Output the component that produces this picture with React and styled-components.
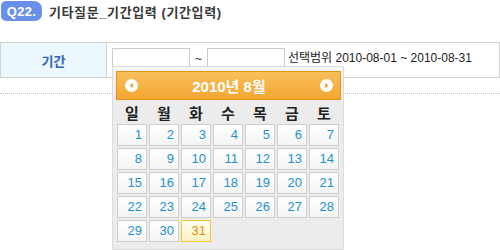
import React from 'react';
import styled, { createGlobalStyle } from 'styled-components';

const GlobalStyle = createGlobalStyle`
  html, body {
    margin: 0;
    padding: 0;
    background: #fff;
  }
  body {
    font-family: "Liberation Sans", "Noto Sans CJK KR", sans-serif;
    color: #333;
  }
`

const Page = styled.div`
  position: relative;
  width: 500px;
  height: 250px;
  overflow: hidden;
`

const TitleRow = styled.div`
  display: flex;
  align-items: center;
  gap: 7px;
  height: 20px;
  padding-top: 1px;
`

const Badge = styled.span`
  display: flex;
  align-items: center;
  justify-content: center;
  width: 41px;
  height: 20px;
  margin-left: 1px;
  border-radius: 5px 8px 7px 5px;
  background: #6a8fe8;
  color: #fff;
  font-size: 13px;
  font-weight: bold;
  letter-spacing: 0.3px;
`

const Title = styled.h2`
  margin: 0;
  font-size: 13px;
  font-weight: bold;
  letter-spacing: 0.6px;
  color: #3a3a3a;
`

const FormTable = styled.div`
  display: grid;
  grid-template-columns: 106px 1fr;
  width: 498px;
  height: 34px;
  margin-top: 21px;
  border: 1px solid #d3d3d3;
`

const LabelCell = styled.div`
  display: flex;
  align-items: center;
  justify-content: center;
  background: #edf7fe;
  border-right: 1px solid #d3d3d3;
  color: #2a68b8;
  font-size: 13px;
  font-weight: bold;
`

const ValueCell = styled.div`
  display: flex;
  align-items: flex-start;
  padding: 5px 0 0 5px;
  font-size: 12px;
`

const DateField = styled.div`
  position: relative;
`

const DateInput = styled.input`
  display: block;
  box-sizing: border-box;
  width: 78px;
  height: 20px;
  margin: 0;
  border: 1px solid #cbcbcb;
  background: #fff;
`

const Tilde = styled.span`
  width: 17px;
  line-height: 22px;
  text-align: center;
  color: #333;
`

const RangeText = styled.span`
  margin-left: 3px;
  line-height: 20px;
  color: #222;
  white-space: nowrap;
`

const Divider = styled.div`
  margin-top: 15px;
  border-top: 1px dotted #c4c4c4;
`

const Calendar = styled.div`
  position: absolute;
  top: 18px;
  left: 0;
  box-sizing: border-box;
  width: 232px;
  height: 184px;
  padding: 4px 3px 0 3px;
  border: 1px solid #dcdcdc;
  background: linear-gradient(#f8f8f8, #ececec 30px, #ececec);
  z-index: 2;
`

const CalHeader = styled.div`
  display: flex;
  align-items: center;
  justify-content: space-between;
  box-sizing: border-box;
  width: 225px;
  height: 29px;
  padding: 0 7px 0 8px;
  border: 1px solid #e49511;
  background: linear-gradient(#f8bf5c, #f3a631);
  color: #fff;
  font-size: 15px;
  font-weight: bold;
`

const NavButton = styled.svg`
  display: block;
  width: 13px;
  height: 13px;
`

const WeekRow = styled.div`
  display: grid;
  grid-template-columns: repeat(7, 30px);
  column-gap: 2px;
  margin-left: 1px;
  height: 24px;
  align-items: center;
`

const WeekName = styled.span`
  text-align: center;
  font-size: 15px;
  font-weight: bold;
  color: #222;
`

const DayGrid = styled.div`
  display: grid;
  grid-template-columns: repeat(7, 30px);
  grid-auto-rows: 22px;
  gap: 2px;
  margin-left: 1px;
`

const DayCell = styled.span`
  box-sizing: border-box;
  padding-right: 4px;
  border: 1px solid ${props => props.today ? "#f2c534" : "#cdcdcd"};
  background: ${props => props.today
    ? "linear-gradient(#fffdf0, #fff1c4)"
    : "linear-gradient(#ffffff, #f4f4f4)"};
  color: ${props => props.today ? "#e58c07" : "#1e92cd"};
  font-size: 13px;
  line-height: 20px;
  text-align: right;
`

function Arrow({ dir }) {
  return (
    <NavButton viewBox="0 0 13 13">
      <circle cx="6.5" cy="6.5" r="6.5" fill="#fff" />
      {dir === "prev"
        ? <polygon points="7.8,3.8 4.6,6.5 7.8,9.2" fill="#f0a02a" />
        : <polygon points="5.2,3.8 8.4,6.5 5.2,9.2" fill="#f0a02a" />}
    </NavButton>
  )
}

const weekNames = ["일", "월", "화", "수", "목", "금", "토"]
const days = Array.from({ length: 31 }, (_, i) => i + 1)

export default function App() {
  return (
    <Page>
      <GlobalStyle />
      <TitleRow>
        <Badge>Q22.</Badge>
        <Title>기타질문_기간입력 (기간입력)</Title>
      </TitleRow>

      <FormTable>
        <LabelCell>기간</LabelCell>
        <ValueCell>
          <DateField>
            <DateInput />
            <Calendar>
              <CalHeader>
                <Arrow dir="prev" />
                <span>2010년 8월</span>
                <Arrow dir="next" />
              </CalHeader>
              <WeekRow>
                {weekNames.map(w => <WeekName key={w}>{w}</WeekName>)}
              </WeekRow>
              <DayGrid>
                {days.map(d => <DayCell key={d} today={d === 31}>{d}</DayCell>)}
              </DayGrid>
            </Calendar>
          </DateField>
          <Tilde>~</Tilde>
          <DateInput />
          <RangeText>선택범위 2010-08-01 ~ 2010-08-31</RangeText>
        </ValueCell>
      </FormTable>

      <Divider />
    </Page>
  )
}
